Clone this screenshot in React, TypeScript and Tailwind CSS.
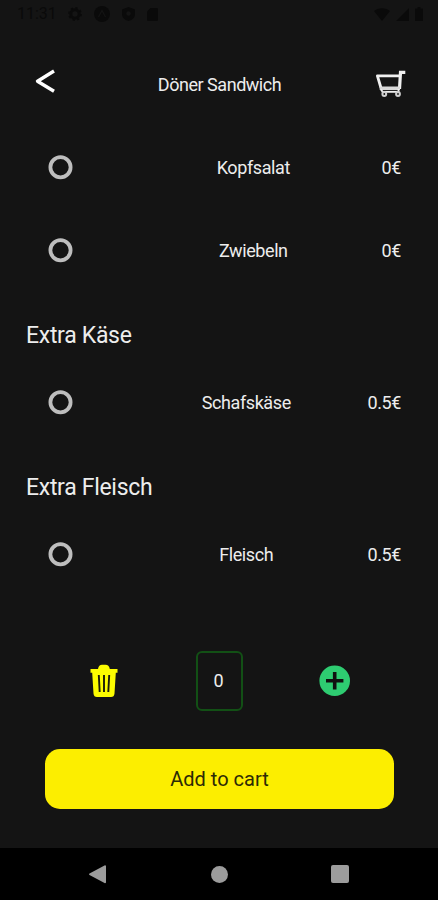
import { useState } from "react";

interface Extra {
  id: string;
  name: string;
  price: number;
}

interface ExtraGroup {
  title?: string;
  items: Extra[];
}

const groups: ExtraGroup[] = [
  {
    items: [
      { id: "kopfsalat", name: "Kopfsalat", price: 0 },
      { id: "zwiebeln", name: "Zwiebeln", price: 0 },
    ],
  },
  { title: "Extra Käse", items: [{ id: "schafskaese", name: "Schafskäse", price: 0.5 }] },
  { title: "Extra Fleisch", items: [{ id: "fleisch", name: "Fleisch", price: 0.5 }] },
];

function StatusBar() {
  return (
    <div className="flex h-7 shrink-0 items-center justify-between pl-[17px] pr-[15px] text-[#0a0a0a]">
      <div className="flex items-center gap-[12px]">
        <span className="w-[39px] text-[16px] leading-7">11:31</span>
        <svg width="14" height="14" viewBox="0 0 14 14" fill="none" stroke="currentColor">
          <circle cx="7" cy="7" r="4.2" strokeWidth="3" />
          <circle cx="7" cy="7" r="6.2" strokeWidth="1.4" strokeDasharray="2.4 2.4" />
        </svg>
        <svg width="16" height="16" viewBox="0 0 16 16">
          <circle cx="8" cy="8" r="8" fill="currentColor" />
          <path d="M4.5 11 8 4.5l3.5 6.5" fill="none" stroke="#141414" strokeWidth="1.2" />
        </svg>
        <svg width="13" height="14" viewBox="0 0 13 14">
          <path d="M6.5 0 13 2.5V7c0 3.5-2.5 6-6.5 7C2.5 13 0 10.5 0 7V2.5z" fill="currentColor" />
          <circle cx="6.5" cy="6.5" r="2.2" fill="#141414" />
        </svg>
        <svg width="11" height="13" viewBox="0 0 11 13" fill="currentColor">
          <path d="M3.5 0H10a1 1 0 0 1 1 1v11a1 1 0 0 1-1 1H1a1 1 0 0 1-1-1V3.5z" />
        </svg>
      </div>
      <div className="flex items-center gap-[6px]">
        <svg width="16" height="13" viewBox="0 0 16 13" fill="currentColor">
          <path d="M0 3C4.5-.8 11.5-.8 16 3L8 13z" />
        </svg>
        <svg width="13" height="13" viewBox="0 0 13 13" fill="currentColor">
          <path d="M13 0v13H0z" />
        </svg>
        <svg width="8" height="14" viewBox="0 0 8 14" fill="currentColor">
          <path d="M2.5 0h3v1.5H8V14H0V1.5h2.5z" />
        </svg>
      </div>
    </div>
  );
}

function CartIcon() {
  return (
    <svg width="32" height="28" viewBox="0 0 32 28" fill="none" stroke="#f0f0f0">
      <path d="M30.3 3.300h-4.800L24.500 20" strokeWidth="3.2" />
      <path d="M25 6.800H2.400L6 19" strokeWidth="2.800" strokeLinejoin="round" />
      <path d="M4.700 19.300h20.300" strokeWidth="3.600" stroke="#d8d8d8" />
      <path d="M6 20.500l1.500 2.300h16V20" strokeWidth="1.800" />
      <circle cx="9.300" cy="25" r="1.900" strokeWidth="2" stroke="#d0d0d0" />
      <circle cx="23" cy="25" r="1.900" strokeWidth="2" stroke="#d0d0d0" />
    </svg>
  );
}

function Header() {
  return (
    <header className="flex h-[98px] shrink-0 items-start justify-between pl-[34px] pr-[31px] pt-[41px]">
      <button aria-label="Back" className="w-[30px]">
        <svg
          width="22"
          height="24"
          viewBox="0 0 22 24"
          fill="none"
          stroke="#ffffff"
          strokeWidth="3.4"
          strokeLinejoin="round"
        >
          <path d="M20 2 3.5 12.2 20 22.2" />
        </svg>
      </button>
      <h1 className="mt-[4px] text-[18px] leading-6 tracking-[-0.47px]">Döner Sandwich</h1>
      <button aria-label="Cart">
        <CartIcon />
      </button>
    </header>
  );
}

interface ExtraRowProps {
  item: Extra;
  checked: boolean;
  onToggle: () => void;
}

function ExtraRow({ item, checked, onToggle }: ExtraRowProps) {
  return (
    <li className="flex h-[83px] items-center justify-between pl-[48px] pr-[37px]">
      <button role="radio" aria-checked={checked} aria-label={item.name} onClick={onToggle} className="w-[77px]">
        <svg width="25" height="25" viewBox="0 0 25 25">
          <circle cx="12.5" cy="12.2" r="10.1" fill="none" stroke="#bebebe" strokeWidth="3.8" />
          {checked && <circle cx="12.5" cy="12.2" r="5" fill="#bebebe" />}
        </svg>
      </button>
      <span className="mt-px text-[18px] leading-6 tracking-[-0.4px]">{item.name}</span>
      <span className="mt-px text-[18px] leading-6 tracking-[-0.4px]">{item.price}€</span>
    </li>
  );
}

function TrashIcon() {
  return (
    <svg width="28" height="34" viewBox="0 0 28 34">
      <path
        d="M.5 5H8Q8.800.8 12 .8h3.500Q19 .8 19.800 5h7.700V8.800h-1.700L24.500 29.500Q24.200 33 21 33H7Q3.800 33 3.500 29.500L2.200 8.800H.5z"
        fill="#fcfc00"
      />
      <path d="M8.800 11l.9 17M14 11v17M19.200 11l-.9 17" stroke="#1c1c08" strokeWidth="1.9" />
    </svg>
  );
}

export default function App() {
  const [selected, setSelected] = useState<string[]>([]);
  const [count, setCount] = useState(0);

  const toggle = (id: string) => {
    setSelected((prev) => (prev.includes(id) ? prev.filter((s) => s !== id) : [...prev, id]));
  };

  return (
    <div className="flex h-[900px] w-[438px] flex-col overflow-hidden bg-[#141414] font-[Roboto,sans-serif] text-[#ededed]">
      <StatusBar />
      <Header />

      <main className="flex-1">
        {groups.map((group, i) => (
          <section key={i}>
            {group.title && (
              <h2 className="h-[69px] pl-[26px] pt-[28px] text-[23px] leading-8 tracking-[-0.3px]">{group.title}</h2>
            )}
            <ul>
              {group.items.map((item) => (
                <ExtraRow
                  key={item.id}
                  item={item}
                  checked={selected.includes(item.id)}
                  onToggle={() => toggle(item.id)}
                />
              ))}
            </ul>
          </section>
        ))}

        <div className="mt-[55px] flex h-[60px] items-center justify-between pl-[90px] pr-[87px]">
          <button aria-label="Remove" onClick={() => setCount(Math.max(0, count - 1))}>
            <TrashIcon />
          </button>
          <div className="ml-px flex h-[60px] w-[47px] items-center justify-center rounded-[6px] border-2 border-[#125015] pr-px pb-[2px] text-[18px]">
            {count}
          </div>
          <button aria-label="Add" onClick={() => setCount(count + 1)}>
            <svg width="32" height="32" viewBox="0 0 32 32">
              <circle cx="15.700" cy="15.7" r="15.3" fill="#2ecc71" />
              <path d="M15.700 7v17.4M7 15.7h17.4" stroke="#101010" strokeWidth="3.6" />
            </svg>
          </button>
        </div>

        <div className="pl-[45px] pr-[44px] pt-[38px]">
          <button className="h-[60px] w-full rounded-[15px] bg-[#fcee00] pb-px text-[20px] text-[#2c2a06]">
            Add to cart
          </button>
        </div>
      </main>

      <nav className="flex h-[52px] shrink-0 items-center justify-between bg-black pl-[89px] pr-[89px] text-[#9c9c9c]">
        <svg width="17" height="19" viewBox="0 0 17 19" fill="currentColor">
          <path d="M16 .2a1 1 0 0 1 1 1v16a1 1 0 0 1-1 1L.5 9.9a.8.8 0 0 1 0-1.4z" />
        </svg>
        <span className="ml-[2px] size-[17px] rounded-full bg-current" />
        <span className="size-[18px] rounded-[2px] bg-current" />
      </nav>
    </div>
  );
}
